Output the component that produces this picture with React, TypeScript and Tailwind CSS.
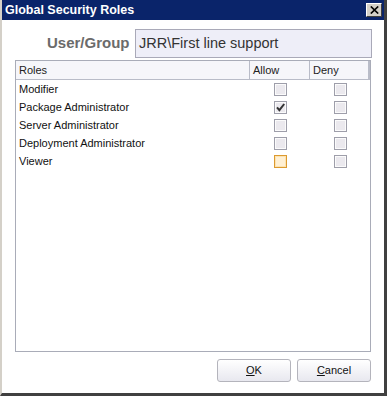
// App.tsx — Global Security Roles dialog
type Role = { name: string; allow: boolean; hover?: boolean };

const roles: Role[] = [
  { name: "Modifier", allow: false },
  { name: "Package Administrator", allow: true },
  { name: "Server Administrator", allow: false },
  { name: "Deployment Administrator", allow: false },
  { name: "Viewer", allow: false, hover: true },
];

function Check({ checked, hover }: { checked?: boolean; hover?: boolean }) {
  return (
    <span
      className={
        hover
          ? "flex h-[13px] w-[13px] items-center justify-center border border-[#dc9a30] bg-[#fff0d4] shadow-[inset_0_0_0_1px_#fde3b0]"
          : "flex h-[13px] w-[13px] items-center justify-center border border-[#9e9eaa] bg-[#ebe9ee] shadow-[inset_0_0_0_1px_#fbfbfb]"
      }
    >
      {checked && (
        <svg width="9" height="9" viewBox="0 0 9 9">
          <path d="M1 4.3 L3.4 7.2 L8.2 1" fill="none" stroke="#333" strokeWidth="2" />
        </svg>
      )}
    </span>
  );
}

export default function App() {
  return (
    <div className="flex h-[396px] w-[387px] flex-col border-b-[3px] border-l-[2px] border-r-[3px] border-b-[#404040] border-l-[#d4d0c8] border-r-[#404040] bg-white font-['Liberation_Sans',Arial,sans-serif]">
      {/* TITLE BAR */}
      <div className="flex h-[20px] items-center justify-between bg-[#0a246a] pl-[3px] pr-[2px]">
        <span className="text-[12.5px] font-bold text-white">Global Security Roles</span>
        <button className="flex h-[14px] w-[16px] items-center justify-center border border-b-[#404040] border-l-white border-r-[#404040] border-t-white bg-[#d4d0c8]">
          <svg width="9" height="8" viewBox="0 0 9 8">
            <path d="M0.8 0.5 L8.2 7.5 M8.2 0.5 L0.8 7.5" stroke="#000" strokeWidth="1.7" />
          </svg>
        </button>
      </div>

      {/* USER / GROUP */}
      <div className="mt-[9px] flex items-center pl-[45px]">
        <span className="w-[88px] text-[15px] font-bold text-[#6b6b6b]">User/Group</span>
        <div className="flex h-[29px] w-[237px] items-center border border-[#a9a9b8] bg-[#eeeef8] px-[3px] text-[14.5px] text-[#333]">
          JRR\First line support
        </div>
      </div>

      {/* GRID */}
      <div className="mx-[13px] mt-[2px] flex h-[292px] flex-col border border-[#a9acb8]">
        <div className="flex h-[19px] border-b border-[#b9bcc8] bg-[#f6f6fa] text-[11px] text-[#222]">
          <div className="flex w-[234px] items-center border-r border-[#b9bcc8] pl-[3px]">Roles</div>
          <div className="flex w-[60px] items-center border-r border-[#b9bcc8] pl-[3px]">Allow</div>
          <div className="flex flex-1 items-center border-r-2 border-[#b9bcc8] pl-[3px]">Deny</div>
        </div>
        {roles.map((r) => (
          <div key={r.name} className="flex h-[18px] items-center text-[11px] text-[#111]">
            <div className="w-[234px] pl-[3px]">{r.name}</div>
            <div className="flex w-[60px] justify-center pl-[1px]">
              <Check checked={r.allow} hover={r.hover} />
            </div>
            <div className="flex flex-1 justify-center">
              <Check />
            </div>
          </div>
        ))}
      </div>

      {/* BUTTONS */}
      <div className="mt-[7px] flex justify-end gap-[6px] pr-[13px]">
        <button className="h-[23px] w-[74px] rounded-[3px] border border-[#b4b4bc] bg-gradient-to-b from-white to-[#e8e8ef] text-[11px] text-[#111]">
          <span className="underline">O</span>K
        </button>
        <button className="h-[23px] w-[74px] rounded-[3px] border border-[#b4b4bc] bg-gradient-to-b from-white to-[#e8e8ef] text-[11px] text-[#111]">
          <span className="underline">C</span>ancel
        </button>
      </div>
    </div>
  );
}
